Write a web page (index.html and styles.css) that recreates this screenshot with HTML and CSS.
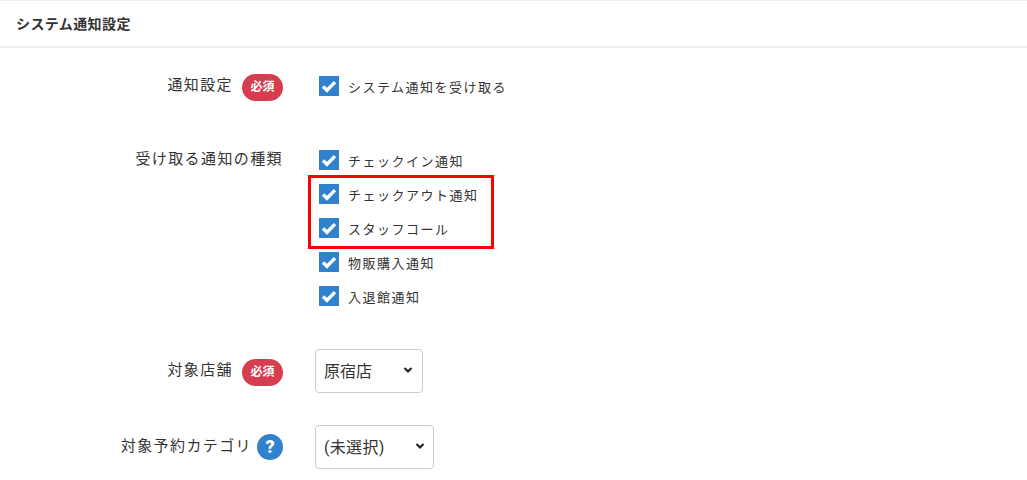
FILE: index.html
```html
<!DOCTYPE html>
<html lang="ja">
<head>
    <meta charset="UTF-8">
    <title>システム通知設定</title>
    <link rel="stylesheet" href="styles.css">
</head>
<body>
    <div class="card-header">システム通知設定</div>
    <div class="card-body">
        <div class="form-row row-notify">
            <div class="label-col">
                <span class="label-text">通知設定</span>
                <span class="badge">必須</span>
            </div>
            <div class="check-list">
                <div class="check-item">
                    <span class="check-box"><svg viewBox="0 0 20 20"><path d="M4 10.5l4 3.8 8-8.2" /></svg></span>
                    <span class="check-text">システム通知を受け取る</span>
                </div>
            </div>
        </div>
        <div class="form-row row-kinds">
            <div class="label-col">
                <span class="label-text">受け取る通知の種類</span>
            </div>
            <div class="check-list">
                <div class="check-item">
                    <span class="check-box"><svg viewBox="0 0 20 20"><path d="M4 10.5l4 3.8 8-8.2" /></svg></span>
                    <span class="check-text">チェックイン通知</span>
                </div>
                <div class="check-item">
                    <span class="check-box"><svg viewBox="0 0 20 20"><path d="M4 10.5l4 3.8 8-8.2" /></svg></span>
                    <span class="check-text">チェックアウト通知</span>
                </div>
                <div class="check-item">
                    <span class="check-box"><svg viewBox="0 0 20 20"><path d="M4 10.5l4 3.8 8-8.2" /></svg></span>
                    <span class="check-text">スタッフコール</span>
                </div>
                <div class="check-item">
                    <span class="check-box"><svg viewBox="0 0 20 20"><path d="M4 10.5l4 3.8 8-8.2" /></svg></span>
                    <span class="check-text">物販購入通知</span>
                </div>
                <div class="check-item">
                    <span class="check-box"><svg viewBox="0 0 20 20"><path d="M4 10.5l4 3.8 8-8.2" /></svg></span>
                    <span class="check-text">入退館通知</span>
                </div>
                <div class="highlight"></div>
            </div>
        </div>
        <div class="form-row row-shop">
            <div class="label-col">
                <span class="label-text">対象店舗</span>
                <span class="badge">必須</span>
            </div>
            <div class="select-box select-shop">
                <span class="select-text">原宿店</span>
                <svg class="chevron" viewBox="0 0 10 8"><path d="M1.5 2l3.5 3.5L8.5 2" /></svg>
            </div>
        </div>
        <div class="form-row row-category">
            <div class="label-col">
                <span class="label-text">対象予約カテゴリ</span>
                <span class="help-icon">?</span>
            </div>
            <div class="select-box select-category">
                <span class="select-text">(未選択)</span>
                <svg class="chevron" viewBox="0 0 10 8"><path d="M1.5 2l3.5 3.5L8.5 2" /></svg>
            </div>
        </div>
    </div>
</body>
</html>
```

FILE: styles.css
```css
* { box-sizing: border-box; }
html, body { margin: 0; padding: 0; }
body {
    height: 480px;
    overflow: hidden;
    background: #fff;
    color: #333;
    font-family: "Roboto", "Noto Sans CJK JP", sans-serif;
}
.card-header {
    height: 48px;
    padding: 13px 16px 0;
    border-top: 1px solid #eee;
    border-bottom: 2px solid #eee;
    font-size: 14px;
    line-height: 20px;
    font-weight: 700;
    letter-spacing: 0.4px;
}
.form-row {
    display: flex;
    align-items: flex-start;
}
.row-notify { padding-top: 26px; }
.row-kinds { padding-top: 40px; }
.row-shop { padding-top: 41px; }
.row-category { padding-top: 42px; }
.label-col {
    display: flex;
    align-items: center;
    justify-content: flex-end;
    gap: 9px;
    width: 283px;
    height: 24px;
    flex-shrink: 0;
}
.label-text {
    font-size: 15px;
    line-height: 24px;
    letter-spacing: 1.4px;
    margin-bottom: 2px;
}
.badge {
    width: 41px;
    height: 27px;
    margin-top: 3px;
    border-radius: 14px;
    background: #d63d4e;
    color: #fff;
    font-size: 12px;
    font-weight: 700;
    line-height: 27px;
    text-align: center;
}
.help-icon {
    width: 26px;
    height: 26px;
    margin-left: -4px;
    border-radius: 50%;
    background: #3182ce;
    color: #fff;
    font-size: 18px;
    font-weight: 900;
    line-height: 26px;
    text-align: center;
}
.check-list {
    position: relative;
    margin-left: 36px;
}
.check-item {
    display: flex;
    align-items: center;
    height: 34px;
}
.row-notify .check-item, .row-kinds .check-item { margin-top: -5px; margin-bottom: 5px; }
.check-box {
    width: 20px;
    height: 20px;
    margin-right: 9px;
    background: #3182ce;
}
.check-box svg {
    display: block;
    width: 20px;
    height: 20px;
    fill: none;
    stroke: #fff;
    stroke-width: 3.4;
}
.check-text {
    font-size: 13px;
    letter-spacing: 1.5px;
    padding-top: 1px;
}
.highlight {
    position: absolute;
    left: -11px;
    top: 27px;
    width: 186px;
    height: 74px;
    border: 3px solid #f00;
}
.select-box {
    display: flex;
    align-items: center;
    justify-content: space-between;
    height: 44px;
    margin-left: 32px;
    padding: 0 10px 0 8px;
    margin-top: -10px;
    border: 1px solid #ccc;
    border-radius: 4px;
    font-size: 16px;
}
.select-text {
    padding-bottom: 3px;
}
.select-shop { width: 108px; padding-right: 9px; }
.select-category { width: 119px; padding-right: 8px; }
.select-category .select-text { letter-spacing: 0.3px; }
.chevron {
    width: 10px;
    height: 8px;
    margin-bottom: 3px;
    fill: none;
    stroke: #222;
    stroke-width: 2.2;
}
```
